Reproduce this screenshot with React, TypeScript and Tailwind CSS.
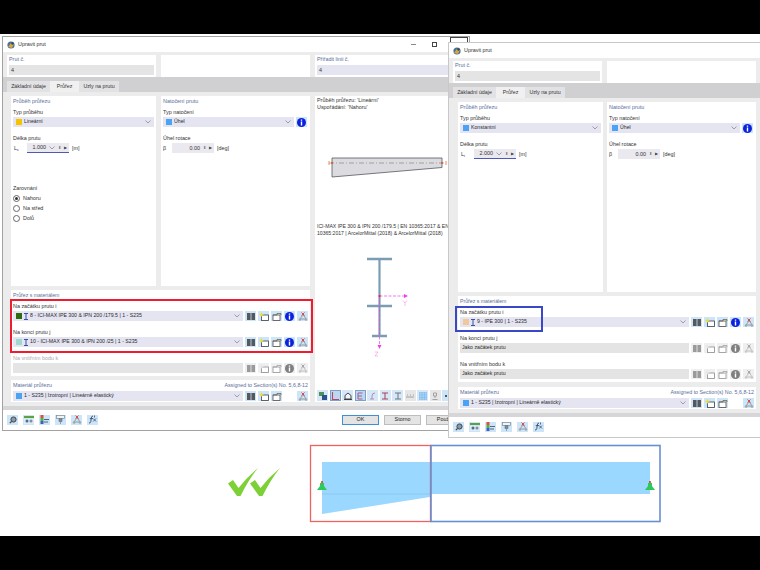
import type { ReactNode } from "react";

const BUTTON = "flex h-[10px] w-[11px] shrink-0 items-center justify-center bg-[#cde5f9]";

function Chevron() {
  return (
    <svg width="6" height="4" viewBox="0 0 6 4" className="shrink-0">
      <path d="M0.5 0.5 3 3 5.5 0.5" fill="none" stroke="#8a8a96" strokeWidth="0.8" />
    </svg>
  );
}

function BookIcon() {
  return (
    <svg width="8" height="7" viewBox="0 0 8 7">
      <path d="M0 0h3.6v7H0zM4.4 0H8v7H4.4z" fill="#55585c" />
    </svg>
  );
}

function NewIcon() {
  return (
    <svg width="10" height="9" viewBox="0 0 10 9">
      <rect x="2.5" y="3" width="7" height="5.5" fill="#fff" stroke="#35404a" strokeWidth="0.8" />
      <path d="M2.5 0 3.2 1.8 5 2.5 3.2 3.2 2.5 5 1.8 3.2 0 2.5 1.8 1.8z" fill="#f3dc1a" />
    </svg>
  );
}

function EditIcon() {
  return (
    <svg width="10" height="9" viewBox="0 0 10 9">
      <rect x="1" y="3" width="7" height="5.5" fill="#fff" stroke="#4b4b4b" strokeWidth="0.8" />
      <path d="M1 3h4V1.5h4V3" fill="#c9b48f" stroke="#4b4b4b" strokeWidth="0.6" />
    </svg>
  );
}

function InfoIcon() {
  return (
    <svg width="9" height="9" viewBox="0 0 9 9">
      <circle cx="4.5" cy="4.5" r="4.5" fill="#0b22dd" />
      <path d="M3.8 1.5h1.4v1.2H3.8zM3.8 3.6h1.4v4H3.8z" fill="#fff" />
    </svg>
  );
}

function LinkIcon() {
  return (
    <svg width="10" height="9" viewBox="0 0 10 9">
      <path d="M2 7 4.500 3.500H6L8 7M2 7H8" fill="none" stroke="#8d9198" strokeWidth="0.9" />
      <circle cx="2" cy="7.500" r="1.200" fill="#a4a8ad" />
      <circle cx="8" cy="7.500" r="1.200" fill="#a4a8ad" />
      <path d="M3.500 0.500 6.500 3.500M6.500 0.500 3.500 3.500" stroke="#dc3a34" strokeWidth="0.9" />
    </svg>
  );
}

function BeamIcon() {
  return (
    <svg width="4" height="7" viewBox="0 0 4 7" className="shrink-0">
      <path d="M0 0h4v1H2.500v5H4v1H0V6h1.500V1H0z" fill="#3552a8" />
    </svg>
  );
}

function TitleIcon() {
  return (
    <svg width="8" height="8" viewBox="0 0 8 8" className="shrink-0">
      <circle cx="4" cy="4" r="3.600" fill="#49709c" />
      <path d="M1 6 4 2 7 3 5 7z" fill="#d8a83a" />
      <circle cx="5.500" cy="2.500" r="1.200" fill="#28486e" />
    </svg>
  );
}

function ToolButton({ children, faded }: { children: ReactNode; faded?: boolean }) {
  return (
    <span className={faded ? "flex h-[10px] w-[11px] shrink-0 items-center justify-center bg-[#e6e6e6] opacity-60 grayscale" : BUTTON}>
      {children}
    </span>
  );
}

function ToolGroup({ faded, noInfo }: { faded?: boolean; noInfo?: boolean }) {
  return (
    <div className="flex shrink-0 gap-[2px]">
      <ToolButton faded={faded}><BookIcon /></ToolButton>
      <ToolButton faded={faded}><NewIcon /></ToolButton>
      <ToolButton faded={faded}><EditIcon /></ToolButton>
      {noInfo ? <span className="w-[11px]" /> : <ToolButton faded={faded}><InfoIcon /></ToolButton>}
      <ToolButton faded={faded}><LinkIcon /></ToolButton>
    </div>
  );
}

function Select({ swatch, beam, text, flat }: { swatch?: string; beam?: boolean; text?: string; flat?: boolean }) {
  return (
    <div className={flat ? "flex h-[10px] min-w-0 flex-1 items-center bg-[#e4e4e4] px-[2px] text-[5.2px]" : "flex h-[10px] min-w-0 flex-1 items-center gap-[2px] bg-[#e4e5f1] pl-[3px] pr-[3px] text-[5.2px]"}>
      {swatch && <span className="h-[6px] w-[6px] shrink-0" style={{ backgroundColor: swatch }} />}
      {beam && <BeamIcon />}
      <span className="flex-1 truncate text-[#2a2a2a]">{text}</span>
      {!flat && <Chevron />}
    </div>
  );
}

function Field({ sym, value, unit, width, underline }: { sym: ReactNode; value: string; unit: string; width: string; underline?: boolean }) {
  return (
    <div className="mt-[1px] flex h-[10px] items-center text-[#333]">
      <span className={width}>{sym}</span>
      <div className={underline ? "flex h-[10px] w-[42px] items-center justify-end gap-[3px] border-b border-[#5159b8] bg-[#e9e9ef] pr-[2px]" : "flex h-[10px] w-[42px] items-center justify-end gap-[3px] bg-[#e9e9ef] pr-[2px]"}>
        <span>{value}</span>
        {underline && <Chevron />}
        <span className="text-[4px] leading-[4px] text-[#666]">⬍</span>
        <span className="text-[4px] text-[#444]">▶</span>
      </div>
      <span className="ml-[3px]">{unit}</span>
    </div>
  );
}

function Radio({ label, on }: { label: string; on?: boolean }) {
  return (
    <div className="flex h-[10px] items-center gap-[3px] text-[#333]">
      <span className="flex h-[7px] w-[7px] items-center justify-center rounded-full border border-[#666] bg-white">
        {on && <span className="h-[3px] w-[3px] rounded-full bg-[#333]" />}
      </span>
      {label}
    </div>
  );
}

function SectionRow({ label, className, children, faded }: { label: string; className: string; children: ReactNode; faded?: boolean }) {
  return (
    <div className={className}>
      <div className={faded ? "h-[9px] leading-[8px] text-[#aaa]" : "h-[9px] leading-[8px] text-[#333]"}>{label}</div>
      <div className="flex gap-[2px]">{children}</div>
    </div>
  );
}

function TopCard({ label, value, width, tone, empty }: { label?: string; value?: string; width: string; tone?: string; empty?: boolean }) {
  return (
    <div className={`${width} h-[22px] shrink-0 bg-white px-[2px]`}>
      {!empty && (
        <>
          <div className="h-[10px] leading-[9px] text-[#5a6e9b]">{label}</div>
          <div className={`${tone} h-[10px] pl-[2px] leading-[10px] text-[#333]`}>{value}</div>
        </>
      )}
    </div>
  );
}

function Tabs() {
  return (
    <div className="flex h-[15px] items-end bg-[#d0d0d3] pl-[4px] text-[5.300px] text-[#333]">
      <span className="flex h-[11px] w-[43px] items-center justify-center bg-[#e2e2e4]">Základní údaje</span>
      <span className="flex h-[11px] w-[29px] items-center justify-center bg-[#f0f0f0]">Průřez</span>
      <span className="flex h-[11px] w-[40px] items-center justify-center bg-[#e2e2e4]">Uzly na prutu</span>
    </div>
  );
}

function BottomIcons() {
  return (
    <div className="mb-[1px] flex gap-[5px]">
      <span className={BUTTON}>
        <svg width="8" height="8" viewBox="0 0 8 8">
          <circle cx="4.500" cy="3.500" r="2.600" fill="#8d98a3" stroke="#3d4750" strokeWidth="1" />
          <path d="M2.500 5.500 0.800 7.200" stroke="#3d4750" strokeWidth="1.200" />
        </svg>
      </span>
      <span className={BUTTON}>
        <svg width="10" height="8" viewBox="0 0 10 8">
          <rect width="10" height="2.200" fill="#5ca04a" />
          <rect y="2.200" width="10" height="5.800" fill="#dfeaf2" />
          <circle cx="3" cy="5" r="1.500" fill="#4d6f8c" />
          <circle cx="7" cy="5" r="1.500" fill="#7093ae" />
        </svg>
      </span>
      <span className={BUTTON}>
        <svg width="9" height="9" viewBox="0 0 9 9">
          <rect x="0.500" width="3" height="3" fill="#e0503a" />
          <rect x="0.500" y="3" width="3" height="3" fill="#54ad4f" />
          <rect x="0.500" y="6" width="3" height="3" fill="#3b5fc0" />
          <path d="M4 4.500H9M4 7H8" stroke="#4a5866" strokeWidth="0.900" />
        </svg>
      </span>
      <span className={BUTTON}>
        <svg width="9" height="9" viewBox="0 0 9 9">
          <rect x="0.500" y="0.500" width="8" height="3" fill="#eef3f7" stroke="#7d8b98" strokeWidth="0.700" />
          <path d="M3 3.500H6V6.500H3zM4.500 6.500V9" fill="#7d8b98" stroke="#66727e" strokeWidth="0.600" />
        </svg>
      </span>
      <span className={BUTTON}><LinkIcon /></span>
      <span className={BUTTON}>
        <svg width="9" height="9" viewBox="0 0 9 9">
          <path d="M5 1Q3.500 1 3.300 3L2.800 6.500Q2.500 8.300 1 8M1.800 3.600H5" fill="none" stroke="#3a4c66" strokeWidth="0.900" />
          <path d="M5.200 3.500 8 6.500M8 3.500 5.200 6.500M6.500 0.500V2.500" stroke="#3a4c66" strokeWidth="0.800" />
        </svg>
      </span>
    </div>
  );
}

function Dialog({ left, top, width, bottom, children, controls, frame }: { left: string; top: string; width: string; bottom: ReactNode; children: ReactNode; controls?: boolean; frame: string }) {
  return (
    <section className={`absolute ${left} ${top} ${width} border ${frame} bg-white`}>
      <header className="flex h-[15px] items-center gap-[3px] pl-[4px] text-[#333]">
        <TitleIcon />
        Upravit prut
        {controls && (
          <div className="ml-[362px] flex items-center gap-[16px]">
            <span className="h-px w-[5px] bg-[#888]" />
            <span className="h-[5px] w-[5px] border border-[#444]" />
          </div>
        )}
      </header>
      {controls && <span className="absolute left-[447px] top-0 flex h-[15px] w-[18px] items-center justify-center border border-[#444] text-[#333]">✕</span>}
      {children}
      <div className="h-[4px] bg-[#d6d6d8]" />
      <footer className="flex h-[20px] items-center pl-[4px] pr-[6px]">{bottom}</footer>
    </section>
  );
}

function TaperDrawing() {
  return (
    <svg width="135" height="30" viewBox="0 0 135 30" className="ml-[8px] mt-[39px]">
      <path d="M7 8H117V17.500L7 27z" fill="#dcdce0" stroke="#55585f" strokeWidth="0.800" />
      <path d="M4 13H120" stroke="#666" strokeWidth="0.500" strokeDasharray="5 2 1 2" />
      <path d="M4 11v4M121 11v4" stroke="#f08a5a" strokeWidth="1" />
      <circle cx="7" cy="13" r="1" fill="#e2562a" />
      <circle cx="117" cy="13" r="1" fill="#e2562a" />
    </svg>
  );
}

function BeamDrawing() {
  return (
    <svg width="100" height="108" viewBox="0 0 100 108" className="ml-[23px] mt-[15px]">
      <path d="M27 7H52M32 84H47M27 54H52" stroke="#7b9db3" strokeWidth="2.400" fill="none" />
      <path d="M39.500 7V84" stroke="#7b9db3" strokeWidth="2.200" fill="none" />
      <path d="M39.500 44H64" stroke="#f13fe6" strokeWidth="0.700" strokeDasharray="3 1.500" />
      <path d="M64 42 68 44 64 46z" fill="#f13fe6" />
      <path d="M39.500 44V93" stroke="#f13fe6" strokeWidth="0.700" strokeDasharray="3 1.500" />
      <path d="M37.500 93 39.500 97 41.500 93z" fill="#f13fe6" />
      <circle cx="39.500" cy="44" r="1" fill="#e22" />
      <path d="M63 48.500 65 51 67 48.500M65 51V54M35 100H38L35 104H38" stroke="#f48cec" strokeWidth="0.600" fill="none" />
    </svg>
  );
}

const PREVIEW_ICONS: { active?: boolean; faded?: boolean; path: ReactNode }[] = [
  { path: <><rect x="0" y="0" width="5" height="4" fill="#4f8f5a" /><rect x="3" y="3" width="5" height="5" fill="#2f4f8f" /></> },
  { active: true, path: <path d="M1.500 0V7.500H8" fill="none" stroke="#b8466a" strokeWidth="1.100" /> },
  { path: <path d="M1 7V3.500L4 1 7 3.500V7zM0 7.500H8" fill="#f4f4f4" stroke="#30343a" strokeWidth="0.900" /> },
  { active: true, path: <path d="M6.500 1H2V7H6.500M2 4H6" fill="none" stroke="#a0528a" strokeWidth="0.900" /> },
  { path: <path d="M6 1Q3 1 3 4V7M1 7H5" fill="none" stroke="#a98fb8" strokeWidth="1" /> },
  { path: <path d="M1 1H7M4 1V7M1 7H7" fill="none" stroke="#a8405e" strokeWidth="1" /> },
  { path: <path d="M1 1H7M4 1V7M1 7H7" fill="none" stroke="#6a7784" strokeWidth="1" /> },
  { faded: true, path: <path d="M0 5H8M1 3H2M4 3H5M7 3H8" fill="none" stroke="#9a9a9a" strokeWidth="0.900" /> },
  { path: <path d="M0 0H8V8H0zM3 0V8M5.500 0V8M0 3H8M0 5.500H8" fill="#a9d4f5" stroke="#74b2e6" strokeWidth="0.500" /> },
  { faded: true, path: <path d="M2.500 1H5.500V4H2.500zM4 4V6M1.500 7.500H6.500" fill="none" stroke="#9a9a9a" strokeWidth="0.900" /> },
];

function PreviewToolbar() {
  return (
    <div className="absolute bottom-[1px] left-[2px] flex gap-[1.500px]">
      {PREVIEW_ICONS.map((icon, i) => (
        <span
          key={i}
          className={
            icon.active
              ? "flex h-[11px] w-[11px] items-center justify-center border border-[#7f9fc6] bg-[#bcd7f0]"
              : icon.faded
                ? "flex h-[11px] w-[11px] items-center justify-center bg-[#e6e6e6]"
                : "flex h-[11px] w-[11px] items-center justify-center bg-[#d6e8f8]"
          }
        >
          <svg width="8" height="8" viewBox="0 0 8 8">{icon.path}</svg>
        </span>
      ))}
      <span className="flex h-[11px] w-[13px] items-center justify-center gap-[1px] bg-[#cde5f9] text-[#111]">
        <span className="h-[2px] w-[2px] bg-[#555]" />
        <span className="text-[4px]">▼</span>
      </span>
    </div>
  );
}

const PANEL_TITLE = "h-[8px] leading-[8px] text-[#5a6e9b]";
const SMALL_LABEL = "h-[8px] leading-[8px] text-[#333]";

function LeftPanel({ children, value, swatch, lengthSym, length }: { children?: ReactNode; value: string; swatch: string; lengthSym: ReactNode; length: string }) {
  return (
    <div className="w-[145px] bg-white px-[2px] pt-[1px]">
      <div className={PANEL_TITLE}>Průběh průřezu</div>
      <div className={`${SMALL_LABEL} mt-[3px]`}>Typ průběhu</div>
      <div className="mt-[1px] flex"><Select swatch={swatch} text={value} /></div>
      <div className={`${SMALL_LABEL} mt-[7px]`}>Délka prutu</div>
      <Field sym={lengthSym} value={length} unit="[m]" width="w-[14px] pl-px" underline />
      {children}
    </div>
  );
}

function RotationPanel() {
  return (
    <div className="w-[149px] bg-white px-[2px] pt-[1px]">
      <div className={PANEL_TITLE}>Natočení prutu</div>
      <div className={`${SMALL_LABEL} mt-[3px]`}>Typ natočení</div>
      <div className="mt-[1px] flex gap-[2px] pr-[1px]">
        <Select swatch="#4ba3f6" text="Úhel" />
        <ToolButton><InfoIcon /></ToolButton>
      </div>
      <div className={`${SMALL_LABEL} mt-[7px]`}>Úhel rotace</div>
      <Field sym="β" value="0.00" unit="[deg]" width="w-[9px]" />
    </div>
  );
}

function MaterialPanel({ text }: { text: string }) {
  return (
    <div className="h-[22px] bg-white px-[2px] pt-[1px]">
      <div className="flex h-[10px] justify-between leading-[9px] text-[#5a6e9b]">
        <span>Materiál průřezu</span>
        <span className="text-[5.300px]">Assigned to Section(s) No. 5,6,8-12</span>
      </div>
      <div className="flex gap-[2px]">
        <Select swatch="#4ba3f6" text={text} />
        <ToolGroup noInfo />
      </div>
    </div>
  );
}

function DialogButton({ label, primary }: { label: string; primary?: boolean }) {
  return (
    <span className={primary ? "flex h-[10px] w-[37px] items-center justify-center border border-[#3f8fd8] bg-[#e4e4e4] text-[#222]" : "flex h-[10px] w-[37px] items-center justify-center border border-[#bdbdbd] bg-[#e4e4e4] text-[#222]"}>
      {label}
    </span>
  );
}

function FirstWindow() {
  return (
    <Dialog
      left="left-[2px]"
      top="top-[36px]"
      width="w-[468px]"
      frame="border-[#a2a2a2]"
      controls
      bottom={
        <>
          <BottomIcons />
          <div className="mb-[1px] ml-auto flex gap-[5px]">
            <DialogButton label="OK" primary />
            <DialogButton label="Storno" />
            <DialogButton label="Použít" />
          </div>
        </>
      }
    >
      <div className="flex gap-[5px] bg-[#ececec] pl-[4px] pt-[3px]">
        <TopCard label="Prut č." value="4" width="w-[149px]" tone="bg-[#e4e4e4]" />
        <TopCard empty width="w-[149px]" />
        <TopCard label="Přiřadit linii č." value="4" width="w-[151px]" tone="bg-[#e4e5f1]" />
      </div>
      <Tabs />
      <div className="flex gap-[5px] bg-[#ececec] pb-[4px] pl-[8px] pt-[4px]">
        <div className="flex w-[299px] flex-col">
          <div className="flex h-[190px] gap-[5px]">
            <LeftPanel value="Lineární" swatch="#f5c400" lengthSym={<>L<sub>c</sub></>} length="1.000">
              <div className={`${SMALL_LABEL} mt-[31px]`}>Zarovnání</div>
              <div className="mt-[1px]">
                <Radio label="Nahoru" on />
                <Radio label="Na střed" />
                <Radio label="Dolů" />
              </div>
            </LeftPanel>
            <RotationPanel />
          </div>
          <div className="relative mt-[4px] h-[86px] bg-white px-[2px] pt-[1px]">
            <div className="h-[11px] text-[5.200px] leading-[8px] text-[#5a6e9b]">Průřez s materiálem</div>
            <SectionRow label="Na začátku prutu i" className="">
              <Select swatch="#2e6a10" beam text="8 - ICI-MAX IPE 300 & IPN 200 /179.5 | 1 - S235" />
              <ToolGroup />
            </SectionRow>
            <SectionRow label="Na konci prutu j" className="mt-[7px]">
              <Select swatch="#9fd8d0" beam text="10 - ICI-MAX IPE 300 & IPN 200 /25 | 1 - S235" />
              <ToolGroup />
            </SectionRow>
            <SectionRow label="Na vnitřním bodu k" className="mt-[7px]" faded>
              <Select flat />
              <ToolGroup faded />
            </SectionRow>
            <div className="absolute left-[-1px] top-[9px] h-[54px] w-[303px] border-2 border-[#ee1c2e]" />
          </div>
          <div className="mt-[4px]">
            <MaterialPanel text="1 - S235 | Izotropní | Lineárně elastický" />
          </div>
        </div>
        <div className="relative w-[151px] bg-white pl-[2px] pt-[1px] text-[#333]">
          <div className="leading-[7px]">Průběh průřezu: 'Lineární'</div>
          <div className="leading-[7px]">Uspořádání: 'Nahoru'</div>
          <TaperDrawing />
          <div className="mt-[43px] w-[133px] text-[5.100px] leading-[7px]">
            ICI-MAX IPE 300 & IPN 200 /179.5 | EN 10365:2017 & EN 10365:2017 | ArcelorMittal (2018) & ArcelorMittal (2018)
          </div>
          <BeamDrawing />
          <PreviewToolbar />
        </div>
      </div>
    </Dialog>
  );
}

function SecondWindow() {
  return (
    <Dialog left="left-[448px]" top="top-[42px]" width="w-[313px]" frame="border-[#c8c8c8]" bottom={<BottomIcons />}>
      <div className="flex gap-[5px] bg-[#ececec] pl-[4px] pt-[3px]">
        <TopCard label="Prut č." value="4" width="w-[149px]" tone="bg-[#e4e4e4]" />
        <TopCard empty width="w-[149px]" />
      </div>
      <Tabs />
      <div className="flex flex-col bg-[#ececec] pb-[4px] pl-[9px] pr-[4px] pt-[4px]">
        <div className="flex h-[190px] gap-[4px]">
          <LeftPanel value="Konstantní" swatch="#4ba3f6" lengthSym={<>L<sub>i</sub></>} length="2.000" />
          <RotationPanel />
        </div>
        <div className="relative mt-[4px] h-[86px] bg-white px-[2px] pt-[1px]">
          <div className="h-[11px] text-[5.200px] leading-[8px] text-[#5a6e9b]">Průřez s materiálem</div>
          <SectionRow label="Na začátku prutu i" className="">
            <Select swatch="#f2c79b" beam text="9 - IPE 300 | 1 - S235" />
            <ToolGroup />
          </SectionRow>
          <SectionRow label="Na konci prutu j" className="mt-[7px]">
            <Select flat text="Jako začátek prutu" />
            <ToolGroup faded />
          </SectionRow>
          <SectionRow label="Na vnitřním bodu k" className="mt-[7px]">
            <Select flat text="Jako začátek prutu" />
            <ToolGroup faded />
          </SectionRow>
          <div className="absolute left-[-3px] top-[10px] h-[26px] w-[88px] border-2 border-[#3a48c8]" />
        </div>
        <div className="mt-[5px]">
          <MaterialPanel text="1 - S235 | Izotropní | Lineárně elastický" />
        </div>
      </div>
    </Dialog>
  );
}

function ComparisonDrawing() {
  return (
    <svg width="460" height="90" viewBox="0 0 460 90" className="absolute left-[225px] top-[440px]">
      <path id="tick" d="M3 43.500 8 40 13.500 48Q22 37 33 28 24 39 15.500 56H12z" fill="#7ed037" />
      <path d="M25 43.500 30 40 35.500 48Q44 37 55 28 46 39 37.500 56H34z" fill="#7ed037" />
      <path d="M97 22H425V54H205V57L97 74z" fill="#9bd8ff" />
      <path d="M97 54H205" stroke="#85c2ea" strokeWidth="0.700" />
      <rect x="85.500" y="5.500" width="120" height="76" fill="none" stroke="#f0625f" strokeWidth="1.300" />
      <rect x="206" y="5.500" width="229" height="76" fill="none" stroke="#6a8fd0" strokeWidth="1.600" />
      <path d="M92 50 95 46V43H99V46L102 50z" fill="#2ec95a" />
      <path d="M420 50 423 46V43H427V46L430 50z" fill="#2ec95a" />
      <circle cx="97" cy="42" r="1" fill="#e22" />
      <circle cx="425" cy="42" r="1" fill="#e22" />
    </svg>
  );
}

export default function App() {
  return (
    <div className="relative h-[570px] w-[760px] overflow-hidden bg-black font-['Liberation_Sans',sans-serif] text-[5.400px]">
      <div className="absolute inset-x-0 top-[34px] h-[502px] bg-white" />
      <FirstWindow />
      <SecondWindow />
      <ComparisonDrawing />
    </div>
  );
}
